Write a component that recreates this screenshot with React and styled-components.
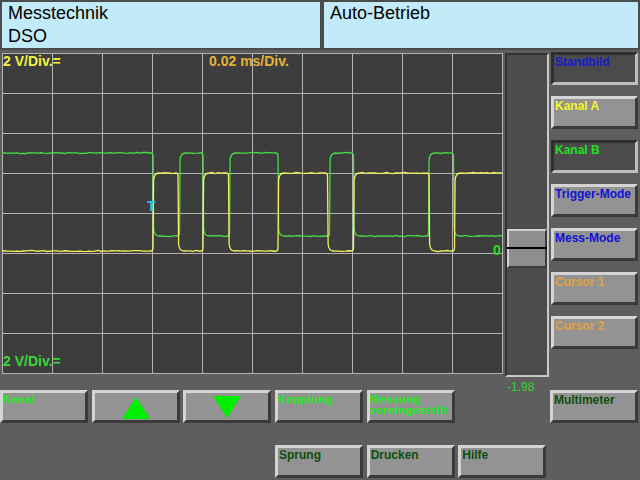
import React from 'react';
import styled, { createGlobalStyle, css } from 'styled-components';

const GlobalStyle = createGlobalStyle`
  html, body { margin: 0; padding: 0; background: #5f5e5f; }
  body {
    width: 640px; height: 480px; overflow: hidden;
    font-family: "Liberation Sans", Arial, sans-serif;
  }
`;

const Screen = styled.div`
  width: 640px;
  height: 480px;
  display: flex;
  flex-direction: column;
  background: #5f5e5f;
`;

const Header = styled.header`
  display: grid;
  grid-template-columns: 318px 1fr;
  column-gap: 4px;
  height: 50px;
  box-sizing: border-box;
  padding: 2px;
  background: #4b4b4b;
`;

const HeaderPanel = styled.div`
  background: #c2ebfa;
  padding: 0 0 0 6px;
  font-size: 18px;
  line-height: 23px;
  color: #000;
`;

const Workspace = styled.div`
  display: grid;
  grid-template-columns: 501px 44px 87px;
  column-gap: 2px;
  height: 340px;
  box-sizing: border-box;
  padding: 2px 0 0 2px;
  align-items: start;
`;

const Scope = styled.div`
  position: relative;
  margin-top: 1px;
  width: 501px;
  height: 321px;
  background: #3d3d3d;
`;

const ScopeSvg = styled.svg`
  display: block;
`;

const ScopeLabel = styled.span`
  position: absolute;
  left: ${p => p.$x}px;
  top: ${p => p.$y}px;
  color: ${p => p.$color};
  font-size: 14px;
  font-weight: bold;
  line-height: 16px;
  white-space: nowrap;
`;

const TrackColumn = styled.div`
  display: flex;
  flex-direction: column;
  margin-top: 1px;
`;

const Track = styled.div`
  position: relative;
  height: 324px;
  box-sizing: border-box;
  border-style: solid;
  border-width: 2px;
  border-color: #333 #c8c8c8 #c8c8c8 #333;
  background: #4c4c4c;
`;

const Thumb = styled.div`
  position: absolute;
  left: 0;
  right: 0;
  top: 174px;
  height: 39px;
  box-sizing: border-box;
  background: #8e8e8e;
  border-style: solid;
  border-width: 2px;
  border-color: #cfcfcf #3c3c3c #3c3c3c #cfcfcf;
  &::after {
    content: "";
    position: absolute;
    left: -2px;
    right: -2px;
    top: 16px;
    height: 2px;
    background: #000;
  }
`;

const Reading = styled.div`
  margin-top: 4px;
  padding-left: 2px;
  color: #33d233;
  font-size: 12px;
  line-height: 12px;
`;

const SideKeys = styled.div`
  display: flex;
  flex-direction: column;
  gap: 11px;
`;

const raised = css`
  background: #939393;
  border-color: #d4d4d4 #3a3a3a #3a3a3a #d4d4d4;
`;

const pressed = css`
  background: #4b4b4b;
  border-color: #2e2e2e #bdbdbd #bdbdbd #2e2e2e;
`;

const Key = styled.div`
  box-sizing: border-box;
  height: 33px;
  border-style: solid;
  border-width: 3px;
  ${p => (p.$pressed ? pressed : raised)}
  padding: ${p => (p.$small ? '1px 0 0 0' : '0 0 0 1px')};
  color: ${p => p.$color};
  font-weight: bold;
  font-size: ${p => (p.$small ? '11px' : '12px')};
  letter-spacing: ${p => (p.$small ? '0.5px' : '0')};
  line-height: ${p => (p.$small ? '11px' : '14px')};
  white-space: pre-line;
  overflow: hidden;
  grid-column: ${p => p.$col || 'auto'};
  grid-row: ${p => p.$row || 'auto'};
`;

const ArrowKey = styled(Key)`
  display: flex;
  align-items: center;
  justify-content: center;
  padding: ${p => (p.$up ? '3px 0 0 0' : '0')};
`;

const Keypad = styled.div`
  display: grid;
  grid-template-columns: repeat(7, 88px);
  grid-template-rows: 33px 33px;
  column-gap: 3.67px;
  row-gap: 22px;
`;

function noise(x, seed) {
  const v = Math.sin(x * 12.9898 + seed * 78.233) * 43758.5453;
  return (v - Math.floor(v) - 0.5) * 1.1;
}

function tracePath(edges, start, a, b, xEnd, seed) {
  let level = start;
  let x = 0;
  let d = `M0 ${level}`;
  const flat = (x0, x1, y) => {
    let s = '';
    for (let xx = x0 + 3; xx < x1 - 1; xx += 3) {
      s += ` L${xx} ${(y + noise(xx, seed)).toFixed(2)}`;
    }
    return s;
  };
  for (const e of edges) {
    const next = level === a ? b : a;
    const dir = next > level ? 1 : -1;
    d += flat(x, e - 2, level);
    d += ` L${e - 2} ${level} Q${e} ${level} ${e} ${level + dir * 3}`;
    d += ` L${e + 0.6} ${next - dir * 7} Q${e + 1.2} ${next} ${e + 6} ${next}`;
    x = e + 6;
    level = next;
  }
  d += flat(x, xEnd, level) + ` L${xEnd} ${level}`;
  return d;
}

const EDGES_B = [151, 177.5, 201, 227.5, 276, 327.5, 351.5, 426.5, 451.5];
const EDGES_A = [151, 176, 201, 226.5, 276, 325.5, 351.5, 427, 452.5];

const greenPath = tracePath(EDGES_B, 100, 100, 183, 500, 1);
const yellowPath = tracePath(EDGES_A, 198, 198, 120, 500, 2);

function ScopeScreen() {
  const vx = Array.from({ length: 11 }, (_, i) => i * 50 + 0.5);
  const hy = Array.from({ length: 9 }, (_, i) => i * 40 + 0.5);
  return (
    <Scope>
      <ScopeSvg width="501" height="321" viewBox="0 0 501 321">
        <g stroke="#b2b2b2" strokeWidth="1" shapeRendering="crispEdges">
          {vx.map(x => <line key={'v' + x} x1={x} y1="0" x2={x} y2="321" />)}
          {hy.map(y => <line key={'h' + y} x1="0" y1={y} x2="501" y2={y} />)}
        </g>
        <path d={greenPath} fill="none" stroke="#48dc44" strokeWidth="1.3" />
        <path d={yellowPath} fill="none" stroke="#f2f25c" strokeWidth="1.3" />
      </ScopeSvg>
      <ScopeLabel $x={1} $y={0} $color="#f4f444">2 V/Div.=</ScopeLabel>
      <ScopeLabel $x={207} $y={0} $color="#e6b238">0.02 ms/Div.</ScopeLabel>
      <ScopeLabel $x={1} $y={300} $color="#3ad83a">2 V/Div.=</ScopeLabel>
      <ScopeLabel $x={145} $y={145} $color="#28c4e6">T</ScopeLabel>
      <ScopeLabel $x={491} $y={189} $color="#22e022">0</ScopeLabel>
    </Scope>
  );
}

const Triangle = ({ up }) => (
  <svg width="28" height="22" viewBox="0 0 28 22">
    <polygon points={up ? '14,0 28,22 0,22' : '0,0 28,0 14,22'} fill="#00ee00" />
  </svg>
);

const SIDE = [
  { label: 'Standbild', color: '#1a1ad0', pressed: true },
  { label: 'Kanal A', color: '#f8f820' },
  { label: 'Kanal B', color: '#22e022', pressed: true },
  { label: 'Trigger-Mode', color: '#1212d8' },
  { label: 'Mess-Mode', color: '#1212d8' },
  { label: 'Cursor 1', color: '#e2a23c' },
  { label: 'Cursor 2', color: '#e2a23c' },
];

const BRIGHT = '#14f014';
const DARK = '#0e4e0e';

export default function App() {
  return (
    <Screen>
      <GlobalStyle />
      <Header>
        <HeaderPanel>
          Messtechnik<br />DSO
        </HeaderPanel>
        <HeaderPanel>Auto-Betrieb</HeaderPanel>
      </Header>
      <Workspace>
        <ScopeScreen />
        <TrackColumn>
          <Track>
            <Thumb />
          </Track>
          <Reading>-1.98</Reading>
        </TrackColumn>
        <SideKeys>
          {SIDE.map(k => (
            <Key key={k.label} $color={k.color} $pressed={k.pressed}>{k.label}</Key>
          ))}
        </SideKeys>
      </Workspace>
      <Keypad>
        <Key $small $color={BRIGHT} $col={1} $row={1}>Kanal</Key>
        <ArrowKey $up $col={2} $row={1}><Triangle up /></ArrowKey>
        <ArrowKey $col={3} $row={1}><Triangle /></ArrowKey>
        <Key $small $color={BRIGHT} $col={4} $row={1}>Kopplung</Key>
        <Key $small $color={BRIGHT} $col={5} $row={1}>{'Messung\nvoreingestellt'}</Key>
        <Key $color={DARK} $col={7} $row={1}>Multimeter</Key>
        <Key $color={DARK} $col={4} $row={2}>Sprung</Key>
        <Key $color={DARK} $col={5} $row={2}>Drucken</Key>
        <Key $color={DARK} $col={6} $row={2}>Hilfe</Key>
      </Keypad>
    </Screen>
  );
}
